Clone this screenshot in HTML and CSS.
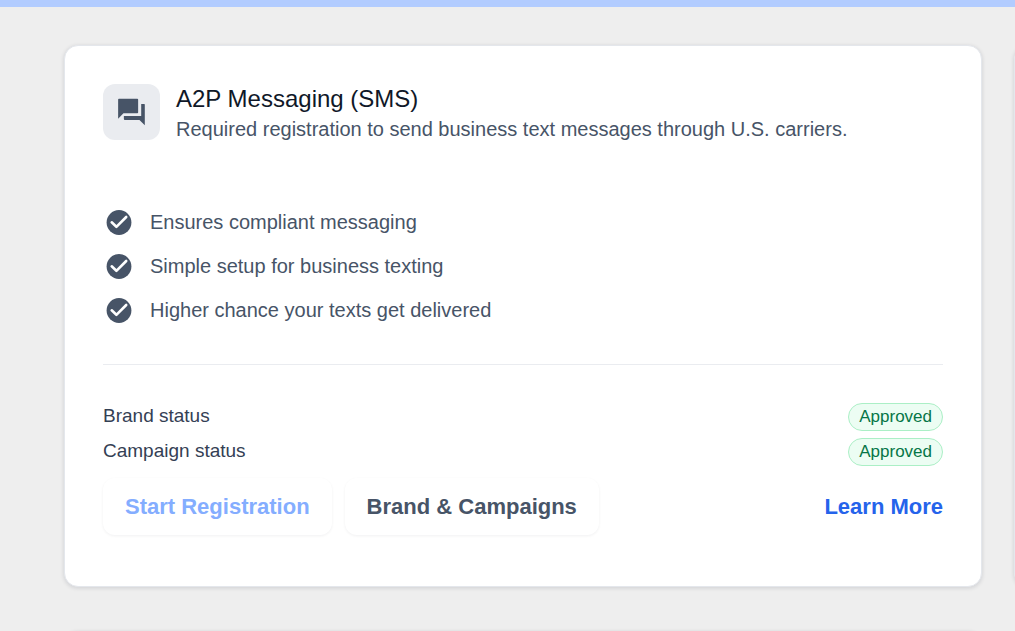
FILE: index.html
```html
<!DOCTYPE html>
<html lang="en">
<head>
<meta charset="utf-8">
<meta name="viewport" content="width=device-width, initial-scale=1">
<title>A2P Messaging</title>
<link rel="stylesheet" href="styles.css">
</head>
<body>
<div class="topbar"></div>
<main class="cards">
  <article class="card">
    <header class="card-header">
      <div class="icon-tile">
        <svg class="forum-icon" viewBox="0.4 0 24 24" aria-hidden="true"><path d="M21.6 6h-2.3v9H6.3v2.3c0 .4.3.7.7.7h11l4 4V6.4c0-.2-.2-.4-.4-.4zM17 12.4V2.6c0-.3-.3-.6-.6-.6H2.6c-.3 0-.6.3-.6.6V17l4-4h10.4c.3 0 .6-.3.6-.6z"/></svg>
      </div>
      <div class="heading">
        <h2 class="title">A2P Messaging (SMS)</h2>
        <p class="description">Required registration to send business text messages through U.S. carriers.</p>
      </div>
    </header>
    <ul class="benefits">
      <li class="benefit"><svg class="check" viewBox="0 0 26 26" aria-hidden="true"><circle cx="13" cy="13.5" r="12.4"/><path d="M5.7 13.3l4.7 4.5L20.2 8"/></svg>Ensures compliant messaging</li>
      <li class="benefit"><svg class="check" viewBox="0 0 26 26" aria-hidden="true"><circle cx="13" cy="13.5" r="12.4"/><path d="M5.7 13.3l4.7 4.5L20.2 8"/></svg>Simple setup for business texting</li>
      <li class="benefit"><svg class="check" viewBox="0 0 26 26" aria-hidden="true"><circle cx="13" cy="13.5" r="12.4"/><path d="M5.7 13.3l4.7 4.5L20.2 8"/></svg>Higher chance your texts get delivered</li>
    </ul>
    <div class="statuses">
      <div class="status"><span class="status-name">Brand status</span><span class="badge">Approved</span></div>
      <div class="status"><span class="status-name">Campaign status</span><span class="badge">Approved</span></div>
    </div>
    <footer class="actions">
      <button class="button" type="button" disabled>Start Registration</button>
      <button class="button" type="button">Brand &amp; Campaigns</button>
      <a class="learn-more" href="#learn-more">Learn More</a>
    </footer>
  </article>
  <article class="card"></article>
  <article class="card"></article>
</main>
</body>
</html>
```
FILE: styles.css
```css
* {
  box-sizing: border-box;
}

body {
  margin: 0;
  height: 100vh;
  overflow: hidden;
  background: #eeeeee;
  color: #475467;
  font-family: "Liberation Sans", Arial, sans-serif;
  font-size: 20px;
}

.topbar {
  height: 7px;
  background: #b2ccff;
}

.cards {
  display: grid;
  grid-template-columns: calc(100% - 33px) 100%;
  gap: 44px 32px;
  padding: 38px 0 0 64px;
}

.card {
  padding: 38px 38px 51px;
  border: 1px solid #e4e7ec;
  border-radius: 14px;
  background: #ffffff;
  box-shadow: 0 1px 4px rgba(16, 24, 40, 0.14);
}

.card-header {
  display: flex;
  gap: 16px;
}

.icon-tile {
  display: flex;
  align-items: center;
  justify-content: center;
  width: 57px;
  height: 56px;
  border-radius: 12px;
  background: #eaecf0;
}

.forum-icon {
  width: 32px;
  height: 32px;
  fill: #475467;
}

.title {
  margin: 0;
  color: #101828;
  font-size: 24px;
  font-weight: 400;
  line-height: 30px;
}

.description {
  margin: 0;
  line-height: 30px;
}

.benefits {
  display: grid;
  gap: 16px;
  margin: 64px 0 0;
  padding: 0 0 40px 3px;
  border-bottom: 1px solid #eaecf0;
  list-style: none;
}

.benefit {
  display: flex;
  align-items: center;
  gap: 18px;
  line-height: 28px;
}

.check {
  width: 26px;
  height: 26px;
  fill: #475467;
}

.check path {
  fill: none;
  stroke: #ffffff;
  stroke-width: 2.6;
  stroke-linecap: round;
  stroke-linejoin: round;
}

.statuses {
  display: grid;
  gap: 7px;
  margin-top: 38px;
}

.status {
  display: flex;
  justify-content: space-between;
}

.status-name {
  color: #344054;
  font-size: 19px;
  line-height: 26px;
}

.badge {
  padding: 0 10px;
  border: 1px solid #abefc6;
  border-radius: 14px;
  background: #ecfdf3;
  color: #067647;
  font-size: 17px;
  line-height: 26px;
}

.actions {
  display: flex;
  align-items: center;
  gap: 13px;
  margin-top: 12px;
}

.button {
  padding: 0 22px;
  border: 0;
  border-radius: 12px;
  background: #ffffff;
  box-shadow: 0 1px 3px rgba(16, 24, 40, 0.06);
  color: #475467;
  font-family: inherit;
  font-size: 22px;
  font-weight: 700;
  line-height: 57px;
}

.button:disabled {
  color: #84adff;
}

.learn-more {
  margin-left: auto;
  color: #2563eb;
  font-size: 22px;
  font-weight: 700;
  text-decoration: none;
}
```
